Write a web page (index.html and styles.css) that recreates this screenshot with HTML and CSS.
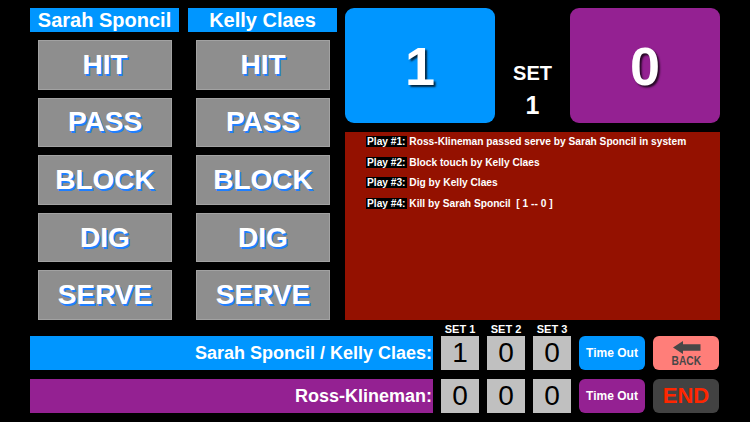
FILE: index.html
```html
<!DOCTYPE html>
<html>
<head>
<meta charset="utf-8">
<link rel="stylesheet" href="styles.css">
</head>
<body>
<div class="app">
  <div class="top">
    <div class="players">
      <div class="player">
        <div class="pname">Sarah Sponcil</div>
        <div class="actions">
          <div class="act">HIT</div>
          <div class="act">PASS</div>
          <div class="act">BLOCK</div>
          <div class="act">DIG</div>
          <div class="act">SERVE</div>
        </div>
      </div>
      <div class="player">
        <div class="pname">Kelly Claes</div>
        <div class="actions">
          <div class="act">HIT</div>
          <div class="act">PASS</div>
          <div class="act">BLOCK</div>
          <div class="act">DIG</div>
          <div class="act">SERVE</div>
        </div>
      </div>
    </div>
    <div class="board">
      <div class="scores">
        <div class="score aqua">1</div>
        <div class="set">
          <div class="set-l">SET</div>
          <div class="set-n">1</div>
        </div>
        <div class="score plum">0</div>
      </div>
      <div class="log">
        <div class="line"><span class="tag">Play #1:</span> Ross-Klineman passed serve by Sarah Sponcil in system</div>
        <div class="line"><span class="tag">Play #2:</span> Block touch by Kelly Claes</div>
        <div class="line"><span class="tag">Play #3:</span> Dig by Kelly Claes</div>
        <div class="line"><span class="tag">Play #4:</span> Kill by Sarah Sponcil&nbsp; [ 1 -- 0 ]</div>
      </div>
    </div>
  </div>
  <div class="bottom">
    <div class="brow labels">
      <div></div>
      <div class="sl">SET 1</div>
      <div class="sl">SET 2</div>
      <div class="sl">SET 3</div>
      <div></div>
      <div></div>
    </div>
    <div class="brow row">
      <div class="team aqua">Sarah Sponcil / Kelly Claes:</div>
      <div class="digit">1</div>
      <div class="digit">0</div>
      <div class="digit">0</div>
      <div class="to aqua">Time Out</div>
      <div class="back">
        <svg class="arrow" width="28" height="13" viewBox="0 0 28 13"><path d="M0 6.5 L10 0 L10 3.3 L27.5 3.3 L27.5 9.7 L10 9.7 L10 13 Z" fill="#474747"/></svg>
        <span class="back-t">BACK</span>
      </div>
    </div>
    <div class="brow row row2">
      <div class="team plum">Ross-Klineman:</div>
      <div class="digit">0</div>
      <div class="digit">0</div>
      <div class="digit">0</div>
      <div class="to plum">Time Out</div>
      <div class="end">END</div>
    </div>
  </div>
</div>
</body>
</html>
```

FILE: styles.css
```css
html, body {
  margin: 0;
  padding: 0;
  background: #000;
}
body {
  font-family: "Liberation Sans", Arial, sans-serif;
  color: #fff;
}
.app {
  width: 750px;
  height: 422px;
  box-sizing: border-box;
  padding: 8px 30px 0 30px;
  overflow: hidden;
}
.top {
  display: flex;
  gap: 8px;
  height: 312px;
}
.players {
  display: flex;
  gap: 9px;
}
.player {
  width: 149px;
  display: flex;
  flex-direction: column;
}
.pname {
  height: 24px;
  line-height: 24px;
  background: #0096ff;
  text-align: center;
  font-size: 20px;
  font-weight: bold;
}
.actions {
  flex: 1;
  margin: 8px 7px 0 8px;
  display: grid;
  grid-template-rows: repeat(5, 1fr);
  row-gap: 8px;
}
.act {
  background: #8e8e8e;
  border: 1px solid #a2a2a2;
  display: flex;
  align-items: center;
  justify-content: center;
  font-size: 28px;
  font-weight: bold;
  text-shadow: 1.5px 1.5px 0.5px #1f7fff;
}
.board {
  width: 375px;
  display: flex;
  flex-direction: column;
  gap: 9px;
}
.scores {
  display: flex;
  height: 115px;
}
.score {
  width: 150px;
  border-radius: 9px;
  display: flex;
  align-items: center;
  justify-content: center;
  font-size: 54px;
  font-weight: bold;
  text-shadow: 2px 2px 2px rgba(0, 0, 0, 0.75);
}
.aqua { background: #0096ff; }
.plum { background: #942192; }
.set {
  flex: 1;
  text-align: center;
  padding-top: 55px;
  box-sizing: border-box;
}
.set-l {
  font-size: 20px;
  line-height: 20px;
  font-weight: bold;
}
.set-n {
  margin-top: 10px;
  font-size: 25px;
  line-height: 25px;
  font-weight: bold;
}
.log {
  flex: 1;
  background: #941100;
  padding: 0 0 0 21px;
  font-size: 10.2px;
  font-weight: bold;
  line-height: 20.5px;
}
.tag {
  background: #000;
  padding: 0 1px;
}
.bottom {
  margin-top: 2px;
}
.brow {
  display: grid;
  grid-template-columns: 403px 38px 38px 38px 66px 66px;
  column-gap: 8px;
}
.labels {
  height: 14px;
}
.sl {
  font-size: 11px;
  line-height: 14px;
  font-weight: bold;
  text-align: center;
  white-space: nowrap;
}
.row {
  height: 34px;
}
.row2 {
  margin-top: 9px;
}
.team {
  text-align: right;
  font-size: 18px;
  line-height: 34px;
  font-weight: bold;
  padding-right: 1px;
}
.digit {
  background: #c0c0c0;
  color: #000;
  font-size: 28px;
  display: flex;
  align-items: center;
  justify-content: center;
}
.to {
  border-radius: 6px;
  font-size: 12px;
  font-weight: bold;
  display: flex;
  align-items: center;
  justify-content: center;
}
.back {
  background: #ff7e79;
  border-radius: 6px;
  display: flex;
  flex-direction: column;
  align-items: center;
  padding-top: 5px;
  box-sizing: border-box;
}
.arrow {
  display: block;
  margin-left: 2px;
}
.back-t {
  display: inline-block;
  color: #474747;
  font-size: 12px;
  line-height: 13px;
  font-weight: bold;
  transform: scaleX(0.85);
  margin-top: 1px;
}
.end {
  background: #424242;
  border-radius: 6px;
  color: #ff2600;
  font-size: 22px;
  font-weight: bold;
  display: flex;
  align-items: center;
  justify-content: center;
}
```
